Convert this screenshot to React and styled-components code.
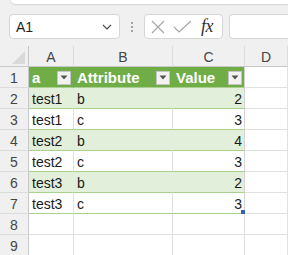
import React from 'react';
import styled, { createGlobalStyle } from 'styled-components';

const GlobalStyle = createGlobalStyle`
  html, body {
    margin: 0;
    padding: 0;
    background: #f0f0f0;
    font-family: "Liberation Sans", Arial, sans-serif;
  }
  * { box-sizing: border-box; }
`;

const Page = styled.div`
  width: 288px;
  height: 255px;
  overflow: hidden;
  background: #f0f0f0;
`;

const TopStrip = styled.div`
  height: 6px;
  overflow: hidden;
  padding-left: 10px;
`;

const SearchBox = styled.div`
  height: 28px;
  margin-top: -24px;
  background: #fff;
  border-radius: 0 0 0 6px;
  box-shadow: 0 1px 2px rgba(0, 0, 0, 0.12);
  padding: 7px 0 0 30px;
  font-size: 13px;
  color: #333;
`;

const FormulaBar = styled.div`
  display: flex;
  align-items: center;
  height: 25px;
  margin-top: 8px;
  padding-left: 9px;
`;

const NameBox = styled.div`
  width: 111px;
  height: 25px;
  background: #fff;
  border: 1px solid #d6d6d6;
  border-radius: 4px;
  display: flex;
  align-items: center;
  justify-content: space-between;
  padding: 0 7px 0 6px;
  font-size: 14px;
  color: #1f1f1f;
`;

const Dots = styled.div`
  width: 24px;
  display: flex;
  flex-direction: column;
  align-items: center;
  gap: 2px;
  span {
    width: 2px;
    height: 2px;
    background: #8a8a8a;
    border-radius: 1px;
  }
`;

const ButtonsBox = styled.div`
  width: 79px;
  height: 25px;
  background: #fff;
  border: 1px solid #d6d6d6;
  border-radius: 4px;
  display: flex;
  align-items: center;
  padding-left: 6px;
  gap: 8px;
`;

const Fx = styled.span`
  font-family: "Liberation Serif", "Times New Roman", serif;
  font-style: italic;
  font-size: 18px;
  color: #333;
  margin-left: 1px;
  letter-spacing: -0.5px;
`;

const FormulaInput = styled.div`
  flex: 1;
  height: 25px;
  margin-left: 6px;
  background: #fff;
  border: 1px solid #d6d6d6;
  border-right: none;
  border-radius: 4px 0 0 4px;
`;

const Grid = styled.div`
  margin-top: 7px;
  display: grid;
  grid-template-columns: 29px 45px 99px 72px 1fr;
  grid-auto-rows: 21px;
`;

const HeadCell = styled.div`
  position: relative;
  background: #f0f0f0;
  color: #454545;
  font-size: 14px;
  display: flex;
  align-items: center;
  justify-content: center;
  padding-top: 1px;
  border-right: 1px solid ${(p) => p.$right || '#dcdcdc'};
  border-bottom: 1px solid ${(p) => p.$bottom || '#dcdcdc'};
`;

const Cell = styled.div`
  position: relative;
  background: ${(p) => p.$fill || '#fff'};
  color: ${(p) => (p.$head ? '#fff' : '#1a1a1a')};
  font-weight: ${(p) => (p.$head ? 700 : 400)};
  font-size: ${(p) => (p.$head ? '15px' : '14px')};
  display: flex;
  align-items: center;
  justify-content: ${(p) => (p.$num ? 'flex-end' : 'flex-start')};
  padding: 1px 2px 0 3px;
  border-right: 1px solid ${(p) => p.$right || '#e1e1e1'};
  border-bottom: 1px solid ${(p) => p.$bottom || '#e1e1e1'};
`;

const Label = styled.span`
  flex: 1;
  white-space: nowrap;
  text-align: ${(p) => (p.$num ? 'right' : 'left')};
`;

const FilterButton = styled.div`
  flex: none;
  width: 14px;
  height: 14px;
  background: #f3f3f3;
  border: 1px solid #c4c4c4;
  display: flex;
  align-items: center;
  justify-content: center;
`;

const ResizeHandle = styled.div`
  position: absolute;
  right: -1px;
  bottom: -1px;
  width: 4px;
  height: 4px;
  background: #3b5fb0;
`;

const Chevron = () => (
  <svg width="10" height="6" viewBox="0 0 10 6">
    <polyline points="1,1 5,5 9,1" fill="none" stroke="#444" strokeWidth="1.1" />
  </svg>
);

const Cross = () => (
  <svg width="14" height="14" viewBox="0 0 14 14">
    <path d="M1 1 L13 13 M13 1 L1 13" stroke="#a6a6a6" strokeWidth="1.2" fill="none" />
  </svg>
);

const Check = () => (
  <svg width="19" height="14" viewBox="0 0 19 14">
    <polyline points="1,7 6,12 18,1" stroke="#a6a6a6" strokeWidth="1.2" fill="none" />
  </svg>
);

const Arrow = () => (
  <svg width="8" height="5" viewBox="0 0 8 5">
    <polygon points="0.5,0.5 7.5,0.5 4,4.5" fill="#555" />
  </svg>
);

const Corner = () => (
  <svg width="29" height="21" viewBox="0 0 29 21" style={{ position: 'absolute', left: 0, top: 0 }}>
    <polygon points="12,18 25,18 25,5" fill="#d9d9d9" />
  </svg>
);

const columns = ['A', 'B', 'C', 'D'];

const header = ['a', 'Attribute', 'Value'];

const rows = [
  ['test1', 'b', 2],
  ['test1', 'c', 3],
  ['test2', 'b', 4],
  ['test2', 'c', 3],
  ['test3', 'b', 2],
  ['test3', 'c', 3],
];

const GREEN = '#70ad47';
const BAND = '#e2efda';
const LINE = '#a9d08e';

const App = () => {
  return (
    <Page>
      <GlobalStyle />
      <TopStrip>
        <SearchBox>Samp</SearchBox>
      </TopStrip>
      <FormulaBar>
        <NameBox>
          <span>A1</span>
          <Chevron />
        </NameBox>
        <Dots>
          <span />
          <span />
          <span />
        </Dots>
        <ButtonsBox>
          <Cross />
          <Check />
          <Fx>fx</Fx>
        </ButtonsBox>
        <FormulaInput />
      </FormulaBar>
      <Grid>
        <HeadCell $right="#c8c8c8" $bottom="#c8c8c8">
          <Corner />
        </HeadCell>
        {columns.map((c) => (
          <HeadCell key={c} $bottom="#c8c8c8">
            {c}
          </HeadCell>
        ))}

        <HeadCell $right="#c8c8c8">1</HeadCell>
        {header.map((h, i) => (
          <Cell
            key={h}
            $head
            $fill={GREEN}
            $right={i === 2 ? '#d4d4d4' : GREEN}
            $bottom={LINE}
          >
            <Label>{h}</Label>
            <FilterButton>
              <Arrow />
            </FilterButton>
          </Cell>
        ))}
        <Cell />

        {rows.map((r, i) => {
          const banded = i % 2 === 0;
          const fill = banded ? BAND : '#fff';
          const inner = banded ? BAND : '#e1e1e1';
          const last = i === rows.length - 1;
          return (
            <React.Fragment key={i}>
              <HeadCell $right="#c8c8c8">{i + 2}</HeadCell>
              <Cell $fill={fill} $right={inner} $bottom={LINE}>
                {r[0]}
              </Cell>
              <Cell $fill={fill} $right={inner} $bottom={LINE}>
                {r[1]}
              </Cell>
              <Cell $num $fill={fill} $right="#d4d4d4" $bottom={LINE}>
                <Label $num>{r[2]}</Label>
                {last && <ResizeHandle />}
              </Cell>
              <Cell />
            </React.Fragment>
          );
        })}

        {[8, 9].map((n) => (
          <React.Fragment key={n}>
            <HeadCell $right="#c8c8c8">{n}</HeadCell>
            <Cell />
            <Cell />
            <Cell />
            <Cell />
          </React.Fragment>
        ))}
      </Grid>
    </Page>
  );
};

export default App;
